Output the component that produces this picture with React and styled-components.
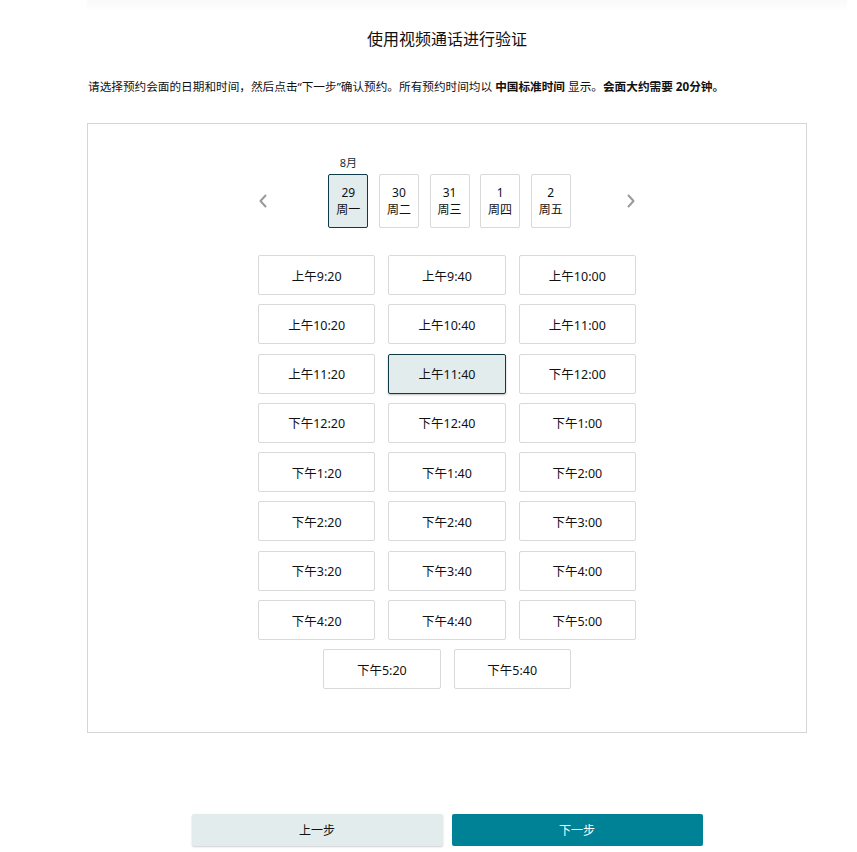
import React from 'react';
import styled, { createGlobalStyle } from 'styled-components';

const GlobalStyle = createGlobalStyle`
  body {
    margin: 0;
    background: #ffffff;
    font-family: "Noto Sans", "Noto Sans CJK SC", sans-serif;
    color: #111111;
  }
`;

const DATES = [
  { day: '29', week: '周一', selected: true },
  { day: '30', week: '周二' },
  { day: '31', week: '周三' },
  { day: '1', week: '周四' },
  { day: '2', week: '周五' },
];

const SLOTS = [
  '上午9:20', '上午9:40', '上午10:00',
  '上午10:20', '上午10:40', '上午11:00',
  '上午11:20', '上午11:40', '下午12:00',
  '下午12:20', '下午12:40', '下午1:00',
  '下午1:20', '下午1:40', '下午2:00',
  '下午2:20', '下午2:40', '下午3:00',
  '下午3:20', '下午3:40', '下午4:00',
  '下午4:20', '下午4:40', '下午5:00',
  '下午5:20', '下午5:40',
];

function Chevron({ dir }) {
  return (
    <svg width="10" height="14" viewBox="0 0 10 14" fill="none">
      <path
        d={dir === 'left' ? 'M7.5 1.5L2.5 7l5 5.5' : 'M2.5 1.5L7.5 7l-5 5.5'}
        stroke="#9a9a9a"
        strokeWidth="2"
        strokeLinecap="round"
        strokeLinejoin="round"
      />
    </svg>
  );
}

export default function App() {
  return (
    <>
      <GlobalStyle />
      <Page>
        <TopShade />
        <Title>使用视频通话进行验证</Title>
        <Intro>
          请选择预约会面的日期和时间，然后点击“下一步”确认预约。所有预约时间均以 <b>中国标准时间</b> 显示。<b>会面大约需要 20分钟。</b>
        </Intro>
        <Card>
          <Picker>
            <NavButton aria-label="上一周">
              <Chevron dir="left" />
            </NavButton>
            <Strip>
              <Month>8月</Month>
              <DateRow>
                {DATES.map((d) => (
                  <DateBox key={d.day} $selected={d.selected}>
                    <span>{d.day}</span>
                    <span>{d.week}</span>
                  </DateBox>
                ))}
              </DateRow>
            </Strip>
            <NavButton aria-label="下一周">
              <Chevron dir="right" />
            </NavButton>
          </Picker>
          <SlotGrid>
            {SLOTS.map((s) => (
              <Slot key={s} $selected={s === '上午11:40'}>
                {s}
              </Slot>
            ))}
          </SlotGrid>
        </Card>
        <Footer>
          <StepButton>上一步</StepButton>
          <StepButton $primary>下一步</StepButton>
        </Footer>
      </Page>
    </>
  );
}

const Page = styled.div`
  width: 720px;
  padding: 0 0 7px 87px;
  display: flex;
  flex-direction: column;
`;

const TopShade = styled.div`
  height: 12px;
  margin: 0 -40px 0 0;
  background: linear-gradient(#f9f9f9, #ffffff);
`;

const Title = styled.h1`
  margin: 16px 0 0;
  font-size: 16px;
  font-weight: 400;
  line-height: 22px;
  text-align: center;
  color: #111111;
`;

const Intro = styled.p`
  margin: 27px 0 0;
  padding-left: 1px;
  font-size: 11.65px;
  line-height: 20px;
  color: #111111;
  white-space: nowrap;

  b {
    font-weight: 700;
  }
`;

const Card = styled.div`
  margin-top: 26px;
  border: 1px solid #d5d5d5;
  padding: 30px 0 43px;
  display: flex;
  flex-direction: column;
  align-items: center;
`;

const Picker = styled.div`
  width: 380px;
  display: flex;
  align-items: flex-end;
  justify-content: space-between;
`;

const NavButton = styled.button`
  width: 12px;
  height: 54px;
  padding: 0;
  border: none;
  background: none;
  display: flex;
  align-items: center;
  justify-content: center;
  cursor: pointer;
`;

const Strip = styled.div`
  display: flex;
  flex-direction: column;
  align-items: flex-start;
  margin-left: 5px;
`;

const Month = styled.div`
  width: 40px;
  text-align: center;
  font-size: 11px;
  line-height: 18px;
  color: #0f2f3a;
  margin-bottom: 2px;
`;

const DateRow = styled.div`
  display: flex;
  gap: 10.6px;
`;

const DateBox = styled.div`
  box-sizing: border-box;
  width: 40px;
  height: 54px;
  display: flex;
  flex-direction: column;
  align-items: center;
  justify-content: center;
  font-size: 12px;
  line-height: 17px;
  color: #111111;
  border-radius: 2px;
  border: 1px solid ${(p) => (p.$selected ? '#0e3b47' : '#d9d9d9')};
  background: ${(p) => (p.$selected ? '#e3eced' : '#ffffff')};
`;

const SlotGrid = styled.div`
  margin-top: 27px;
  width: 378px;
  display: flex;
  flex-wrap: wrap;
  justify-content: center;
  gap: 9.3px 13px;
`;

const Slot = styled.div`
  box-sizing: border-box;
  width: calc((100% - 26px) / 3);
  height: 40px;
  display: flex;
  align-items: center;
  justify-content: center;
  font-size: 12.5px;
  color: #111111;
  border-radius: 2px;
  border: 1px solid ${(p) => (p.$selected ? '#0e3b47' : '#d9d9d9')};
  background: ${(p) => (p.$selected ? '#e3eced' : '#ffffff')};
  box-shadow: ${(p) => (p.$selected ? '0 1px 2px rgba(0,0,0,0.25)' : 'none')};
`;

const Footer = styled.div`
  margin-top: 81px;
  display: flex;
  justify-content: center;
  gap: 9px;
`;

const StepButton = styled.button`
  width: 251px;
  height: 32px;
  border: none;
  border-radius: 2px;
  font-family: "Noto Sans", "Noto Sans CJK SC", sans-serif;
  font-size: 12px;
  cursor: pointer;
  color: ${(p) => (p.$primary ? '#ffffff' : '#111111')};
  background: ${(p) => (p.$primary ? '#008296' : '#e3eced')};
  box-shadow: ${(p) => (p.$primary ? 'none' : '0 1px 2px rgba(0,0,0,0.2)')};
`;
